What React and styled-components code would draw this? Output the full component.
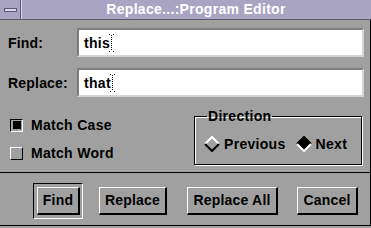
import React from 'react';
import styled, { createGlobalStyle } from 'styled-components';

const GlobalStyle = createGlobalStyle`
  * {
    box-sizing: border-box;
  }
  body {
    margin: 0;
    background: #a0a0a0;
    font-family: "Liberation Sans", Arial, sans-serif;
  }
`;

const Window = styled.div`
  width: 371px;
  height: 228px;
  display: flex;
  flex-direction: column;
  background: #a0a0a0;
  overflow: hidden;
`;

const TitleBar = styled.div`
  display: flex;
  height: 20px;
  flex-shrink: 0;
  background: #a8a4c2;
  border-bottom: 1px solid #5c5a70;
`;

const MenuButton = styled.div`
  width: 21px;
  display: flex;
  align-items: center;
  justify-content: center;
  border-right: 1px solid #5c5a70;
  box-shadow: 1px 0 0 #d8d4ec;
`;

const MenuBar = styled.div`
  width: 13px;
  height: 4px;
  background: #d8d4ec;
  border: 1px solid #5c5a70;
`;

const Title = styled.div`
  flex: 1;
  color: #fff;
  font-weight: bold;
  font-size: 14px;
  line-height: 19px;
  text-align: center;
  letter-spacing: 0.3px;
`;

const Body = styled.div`
  display: flex;
  flex-direction: column;
  flex-shrink: 0;
  padding: 8px 6px 0 8px;
  border-right: 1px solid #000;
  height: 152px;
`;

const FieldRow = styled.div`
  display: flex;
  align-items: center;
  margin-bottom: 11px;
`;

const Label = styled.div`
  width: 69px;
  font-weight: bold;
  font-size: 14px;
  letter-spacing: 0.2px;
  color: #000;
`;

const Input = styled.div`
  flex: 1;
  height: 29px;
  background: #fff;
  border: 2px solid;
  border-color: #7c7c7c #d4d4d4 #d4d4d4 #7c7c7c;
  display: flex;
  align-items: center;
  padding-left: 5px;
  font-weight: bold;
  font-size: 14px;
  letter-spacing: 0.3px;
  color: #000;
`;

const Options = styled.div`
  display: flex;
  justify-content: space-between;
  margin-top: 1px;
`;

const Checks = styled.div`
  display: flex;
  flex-direction: column;
  gap: 12px;
  padding-top: 8px;
  padding-left: 2px;
`;

const CheckRow = styled.div`
  display: flex;
  align-items: center;
  gap: 8px;
  font-weight: bold;
  font-size: 14px;
  letter-spacing: 0.3px;
`;

const Box = styled.div`
  width: 13px;
  height: 13px;
  border: 1px solid;
  border-color: ${p => (p.$on ? '#000 #fff #fff #000' : '#fff #000 #000 #fff')};
  display: flex;
  align-items: center;
  justify-content: center;
  &::after {
    content: '';
    width: 8px;
    height: 8px;
    background: ${p => (p.$on ? '#000' : 'transparent')};
  }
`;

const Group = styled.fieldset`
  margin: 0 2px 0 0;
  width: 168px;
  height: 56px;
  padding: 0 0 0 9px;
  border: 1px solid #000;
  box-shadow: inset 1px 1px 0 #fff, 1px 1px 0 #fff;
  display: flex;
  align-items: center;
  min-width: 0;
`;

const Legend = styled.legend`
  font-weight: bold;
  font-size: 14px;
  letter-spacing: 0.3px;
  padding: 0 1px;
  margin-left: 3px;
  line-height: 14px;
`;

const Radio = styled.div`
  display: flex;
  align-items: center;
  gap: 4px;
  font-weight: bold;
  font-size: 14px;
  letter-spacing: 0.3px;
  margin-right: ${p => p.$mr || 0}px;
  margin-top: 1px;
`;

const Footer = styled.div`
  flex: 1;
  display: flex;
  align-items: center;
  padding: 3px 0 0 33px;
  gap: 16px;
  border-top: 1px solid #000;
  border-right: 1px solid #000;
  border-bottom: 1px solid #000;
  margin-bottom: 2px;
`;

const DefaultFrame = styled.div`
  padding: 3px 2px 3px 3px;
  border: 1px solid;
  border-color: #000 #fff #fff #000;
  display: flex;
`;

const Button = styled.button`
  width: ${p => p.$w}px;
  height: 28px;
  background: #a0a0a0;
  border-style: solid;
  border-width: 1px 2px 2px 1px;
  border-color: #fff #000 #000 #fff;
  font-family: "Liberation Sans", Arial, sans-serif;
  font-weight: bold;
  font-size: 14px;
  letter-spacing: 0.2px;
  color: #000;
  padding: 0;
  margin-left: ${p => p.$ml || 0}px;
`;

const Cursor = () => (
  <svg width="5" height="18" viewBox="0 0 5 18" style={{ marginLeft: -1 }}>
    <rect x="0" y="0" width="1" height="1" fill="#000" />
    <rect x="4" y="0" width="1" height="1" fill="#000" />
    {[1, 3, 5, 7, 9, 11, 13, 15].map(y => (
      <rect key={y} x="2" y={y} width="1" height="1" fill="#000" />
    ))}
    <rect x="0" y="17" width="1" height="1" fill="#000" />
    <rect x="4" y="17" width="1" height="1" fill="#000" />
  </svg>
);

const Diamond = ({ on }) => (
  <svg width="16" height="16" viewBox="0 0 16 16">
    <polygon points="8,1 15,8 8,15 1,8" fill={on ? '#000' : '#a0a0a0'} />
    <polyline points="1,8 8,1 15,8" fill="none" stroke={on ? '#000' : '#fff'} strokeWidth="2" />
    <polyline points="1,8 8,15 15,8" fill="none" stroke={on ? '#fff' : '#000'} strokeWidth="2" />
  </svg>
);

export default function App() {
  return (
    <Window>
      <GlobalStyle />
      <TitleBar>
        <MenuButton>
          <MenuBar />
        </MenuButton>
        <Title>Replace...:Program Editor</Title>
      </TitleBar>
      <Body>
        <FieldRow>
          <Label>Find:</Label>
          <Input>
            this
            <Cursor />
          </Input>
        </FieldRow>
        <FieldRow>
          <Label>Replace:</Label>
          <Input>
            that
            <Cursor />
          </Input>
        </FieldRow>
        <Options>
          <Checks>
            <CheckRow>
              <Box $on />
              Match Case
            </CheckRow>
            <CheckRow>
              <Box />
              Match Word
            </CheckRow>
          </Checks>
          <Group>
            <Legend>Direction</Legend>
            <Radio $mr={10}>
              <Diamond />
              Previous
            </Radio>
            <Radio>
              <Diamond on />
              Next
            </Radio>
          </Group>
        </Options>
      </Body>
      <Footer>
        <DefaultFrame>
          <Button $w={43}>Find</Button>
        </DefaultFrame>
        <Button $w={68}>Replace</Button>
        <Button $w={91} $ml={4}>Replace All</Button>
        <Button $w={61} $ml={3}>Cancel</Button>
      </Footer>
    </Window>
  );
}
